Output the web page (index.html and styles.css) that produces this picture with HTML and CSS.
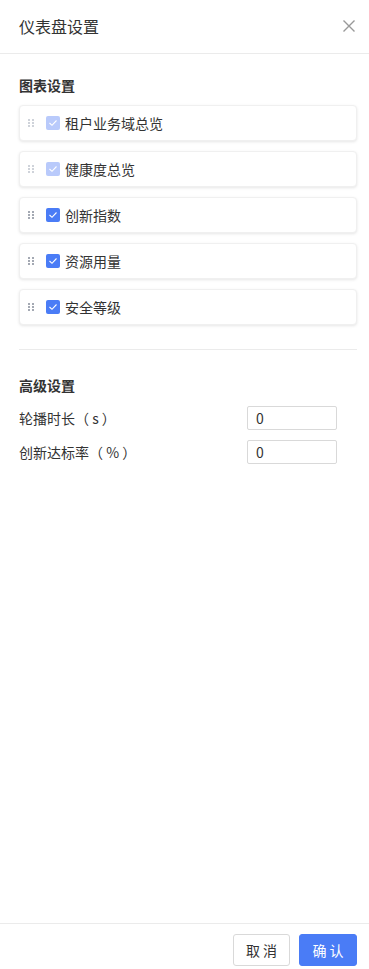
FILE: index.html
```html
<!DOCTYPE html>
<html lang="zh-CN">
<head>
    <meta charset="UTF-8">
    <meta name="viewport" content="width=device-width, initial-scale=1.0">
    <title>仪表盘设置</title>
    <link rel="stylesheet" href="styles.css">
</head>
<body>
    <div class="drawer">
        <div class="drawer-header">
            <span class="drawer-title">仪表盘设置</span>
            <svg class="close-icon" width="12" height="12" viewBox="0 0 12 12">
                <path d="M0.5 0.5 L11.5 11.5 M11.5 0.5 L0.5 11.5" stroke="#999" stroke-width="1.4" fill="none"/>
            </svg>
        </div>

        <div class="drawer-body">
            <div class="section-title">图表设置</div>
            <div class="chart-list">
                <div class="chart-item disabled">
                    <span class="handle"><i></i><i></i><i></i><i></i><i></i><i></i></span>
                    <span class="checkbox"><svg width="10" height="8" viewBox="0 0 10 8"><path d="M1.5 4 L4 6.3 L8.5 1.5" stroke="#fff" stroke-width="1.1" fill="none"/></svg></span>
                    <span class="chart-name">租户业务域总览</span>
                </div>
                <div class="chart-item disabled">
                    <span class="handle"><i></i><i></i><i></i><i></i><i></i><i></i></span>
                    <span class="checkbox"><svg width="10" height="8" viewBox="0 0 10 8"><path d="M1.5 4 L4 6.3 L8.5 1.5" stroke="#fff" stroke-width="1.1" fill="none"/></svg></span>
                    <span class="chart-name">健康度总览</span>
                </div>
                <div class="chart-item">
                    <span class="handle"><i></i><i></i><i></i><i></i><i></i><i></i></span>
                    <span class="checkbox"><svg width="10" height="8" viewBox="0 0 10 8"><path d="M1.5 4 L4 6.3 L8.5 1.5" stroke="#fff" stroke-width="1.1" fill="none"/></svg></span>
                    <span class="chart-name">创新指数</span>
                </div>
                <div class="chart-item">
                    <span class="handle"><i></i><i></i><i></i><i></i><i></i><i></i></span>
                    <span class="checkbox"><svg width="10" height="8" viewBox="0 0 10 8"><path d="M1.5 4 L4 6.3 L8.5 1.5" stroke="#fff" stroke-width="1.1" fill="none"/></svg></span>
                    <span class="chart-name">资源用量</span>
                </div>
                <div class="chart-item">
                    <span class="handle"><i></i><i></i><i></i><i></i><i></i><i></i></span>
                    <span class="checkbox"><svg width="10" height="8" viewBox="0 0 10 8"><path d="M1.5 4 L4 6.3 L8.5 1.5" stroke="#fff" stroke-width="1.1" fill="none"/></svg></span>
                    <span class="chart-name">安全等级</span>
                </div>
            </div>

            <div class="divider"></div>

            <div class="section-title">高级设置</div>
            <div class="form-row">
                <label for="interval">轮播时长（ s ）</label>
                <input id="interval" type="text" value="0">
            </div>
            <div class="form-row">
                <label for="rate">创新达标率（ % ）</label>
                <input id="rate" type="text" value="0">
            </div>
        </div>

        <div class="drawer-footer">
            <button class="btn">取 消</button>
            <button class="btn btn-primary">确 认</button>
        </div>
    </div>
</body>
</html>
```

FILE: styles.css
```css
* {
    box-sizing: border-box;
}
html, body {
    margin: 0;
    padding: 0;
    height: 100%;
}
body {
    font-family: "Noto Sans CJK SC", "Liberation Sans", sans-serif;
    color: #333;
    background-color: #fff;
}
.drawer {
    display: flex;
    flex-direction: column;
    height: 100%;
}
.drawer-header {
    height: 54px;
    display: flex;
    align-items: center;
    justify-content: space-between;
    padding: 0 14px 1px 19px;
    border-bottom: 1px solid #ebebeb;
}
.drawer-title {
    font-size: 16px;
    line-height: 22px;
    color: #333;
}
.drawer-body {
    flex: 1;
    padding: 21px 12px 0 19px;
}
.section-title {
    font-size: 14px;
    font-weight: bold;
    line-height: 20px;
    color: #333;
}
.chart-list {
    margin-top: 10px;
    display: flex;
    flex-direction: column;
    gap: 10px;
}
.chart-item {
    display: flex;
    align-items: center;
    height: 36px;
    padding-left: 8px;
    background-color: #fff;
    border: 1px solid #f0f0f0;
    border-radius: 4px;
    box-shadow: 0 1px 3px rgba(0,0,0,0.1);
}
.handle {
    display: grid;
    grid-template-columns: 2px 2px;
    column-gap: 2px;
    row-gap: 1px;
    width: 6px;
    margin-right: 12px;
}
.handle i {
    display: block;
    width: 2px;
    height: 2px;
    background-color: #a4a9b3;
}
.disabled .handle i {
    background-color: #cfd3da;
}
.checkbox {
    display: flex;
    align-items: center;
    justify-content: center;
    width: 14px;
    height: 14px;
    border-radius: 2px;
    background-color: #4a7cf6;
    margin-right: 5px;
}
.disabled .checkbox {
    background-color: #b9cafb;
}
.chart-name {
    font-size: 14px;
    line-height: 20px;
    color: #333;
}
.divider {
    height: 1px;
    background-color: #ebebeb;
    margin: 24px 0 25px;
}
.form-row {
    display: grid;
    grid-template-columns: 228px 90px;
    align-items: center;
    margin-top: 10px;
}
.section-title + .form-row {
    margin-top: 11px;
}
.form-row label {
    font-size: 14px;
    line-height: 20px;
    color: #333;
    white-space: pre;
}
.form-row input {
    width: 90px;
    height: 24px;
    padding: 0 8px;
    border: 1px solid #d9d9d9;
    border-radius: 2px;
    font-family: "Noto Sans CJK SC", "Liberation Sans", sans-serif;
    font-size: 14px;
    color: #333;
    outline: none;
}
.drawer-footer {
    height: 46px;
    border-top: 1px solid #ebebeb;
    display: flex;
    justify-content: flex-end;
    align-items: flex-start;
    gap: 9px;
    padding: 10px 12px 0 0;
}
.btn {
    height: 32px;
    width: 57px;
    padding: 0;
    font-family: "Noto Sans CJK SC", "Liberation Sans", sans-serif;
    font-size: 14px;
    color: #333;
    background-color: #fff;
    border: 1px solid #d9d9d9;
    border-radius: 3px;
    cursor: pointer;
}
.btn-primary {
    width: 58px;
    color: #fff;
    background-color: #4a7cf6;
    border-color: #4a7cf6;
}
```
